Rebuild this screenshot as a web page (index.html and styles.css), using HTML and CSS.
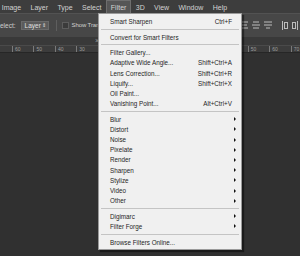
FILE: index.html
```html
<!DOCTYPE html>
<html lang="en">

<head>
  <meta charset="UTF-8">
  <title>Filter menu</title>
  <link rel="stylesheet" href="styles.css">
</head>

<body>
  <div class="app">
    <!-- menu bar -->
    <ul class="menubar">
      <li>Image</li>
      <li>Layer</li>
      <li>Type</li>
      <li>Select</li>
      <li class="open">Filter</li>
      <li>3D</li>
      <li>View</li>
      <li>Window</li>
      <li>Help</li>
    </ul>

    <!-- options bar -->
    <div class="options">
      <span class="label">elect:</span>
      <span class="select">Layer <span class="updown">&#8661;</span></span>
      <span class="vsep"></span>
      <span class="check"></span>
      <span class="label short">Show Tran</span>
      <span class="tools">
        <svg width="10" height="8" viewBox="0 0 10 8"><path d="M1 1h8M2 4h6M1 7h8" stroke="#bdbdbd" stroke-width="1"/></svg>
        <svg width="10" height="8" viewBox="0 0 10 8"><path d="M2 1h6M1 4h8M2 7h6" stroke="#bdbdbd" stroke-width="1"/></svg>
        <svg width="10" height="8" viewBox="0 0 10 8"><path d="M1 1h8M1 4h8M3 7h4" stroke="#bdbdbd" stroke-width="1"/></svg>
        <svg class="gap" width="8" height="9" viewBox="0 0 8 9"><path d="M1.5 0v9" stroke="#bdbdbd"/><rect x="3.5" y="1.5" width="3" height="6" fill="none" stroke="#bdbdbd"/></svg>
        <svg width="8" height="9" viewBox="0 0 8 9"><rect x="1.5" y="1.5" width="3" height="6" fill="none" stroke="#bdbdbd"/><path d="M6.5 0v9" stroke="#bdbdbd"/></svg>
      </span>
    </div>

    <!-- document tab strip -->
    <div class="tabs"><span class="close">&times;</span></div>

    <!-- ruler (labels under the menu are hidden anyway) -->
    <div class="ruler">
      <span>60</span><span>50</span><span>40</span><span>30</span>
      <span></span><span></span><span></span><span></span><span></span><span></span><span></span>
      <span>50</span><span>60</span><span>70</span>
    </div>

    <div class="canvas"></div>

    <!-- the open Filter menu -->
    <ul class="dropdown">
      <li>Smart Sharpen <em>Ctrl+F</em></li>
      <li class="sep"></li>
      <li>Convert for Smart Filters</li>
      <li class="sep"></li>
      <li>Filter Gallery...</li>
      <li>Adaptive Wide Angle... <em>Shift+Ctrl+A</em></li>
      <li>Lens Correction... <em>Shift+Ctrl+R</em></li>
      <li>Liquify... <em>Shift+Ctrl+X</em></li>
      <li>Oil Paint...</li>
      <li>Vanishing Point... <em>Alt+Ctrl+V</em></li>
      <li class="sep"></li>
      <li class="sub">Blur</li>
      <li class="sub">Distort</li>
      <li class="sub">Noise</li>
      <li class="sub">Pixelate</li>
      <li class="sub">Render</li>
      <li class="sub">Sharpen</li>
      <li class="sub">Stylize</li>
      <li class="sub">Video</li>
      <li class="sub">Other</li>
      <li class="sep"></li>
      <li class="sub">Digimarc</li>
      <li class="sub">Filter Forge</li>
      <li class="sep"></li>
      <li>Browse Filters Online...</li>
    </ul>
  </div>
</body>

</html>
```

FILE: styles.css
```css
* {
  box-sizing: border-box;
}

body {
  margin: 0;
  background: #303030;
  font-family: "Liberation Sans", Arial, sans-serif;
}

ul {
  margin: 0;
  padding: 0;
  list-style: none;
}

.app {
  position: relative;
  display: flex;
  flex-direction: column;
  width: 300px;
  height: 256px;
  overflow: hidden;
}

/* 顶部菜单栏 */
.menubar {
  display: flex;
  height: 13px;
  margin-left: -3px;
  background: #3d3d3d;
  color: #d2d2d2;
  font-size: 7px;
  white-space: nowrap;
}

.menubar li {
  padding: 3px 3.7px 0;
  border: 1px solid transparent;
  border-bottom: 0;
  line-height: 8px;
}

.menubar .open {
  background: #565656;
  border-color: #6e6e6e;
}

/* 选项栏 */
.options {
  display: flex;
  align-items: center;
  height: 24px;
  padding-bottom: 1px;
  background: #474747;
  border-top: 1px solid #525252;
  color: #d0d0d0;
  font-size: 6.5px;
  white-space: nowrap;
}

.select {
  display: flex;
  justify-content: space-between;
  align-items: center;
  width: 28px;
  height: 9px;
  margin-left: 5px;
  padding: 0 2px 0 3px;
  background: #5b5b5b;
  border: 1px solid #6a6a6a;
  color: #e0e0e0;
}

.updown {
  font-size: 5px;
}

.vsep {
  width: 1px;
  height: 11px;
  margin: 0 5px 0 7px;
  background: #5e5e5e;
}

.check {
  width: 7px;
  height: 7px;
  margin-right: 3px;
  background: #3b3b3b;
  border: 1px solid #5d5d5d;
}

/* 菜单左边只露出这一段 */
.short {
  font-size: 6px;
  letter-spacing: -0.1px;
}

.tools {
  display: flex;
  gap: 2px;
  align-items: center;
  margin-left: auto;
  padding-right: 1px;
}

.tools .gap {
  margin-left: 6px;
}

/* 文档标签 */
.tabs {
  height: 8px;
  background: #393939;
  color: #9a9a9a;
  font-size: 7px;
  line-height: 8px;
}

.close {
  margin-left: 95px;
}

/* 标尺 */
.ruler {
  display: flex;
  height: 8px;
  padding-left: 12px;
  background: #3c3c3c repeating-linear-gradient(90deg, #6a6a6a 0 1px, transparent 1px 2.68px) 12px 6px / 100% 2px no-repeat;
  border-top: 1px solid #4a4a4a;
  border-bottom: 1px solid #262626;
  color: #9c9c9c;
  font-size: 5px;
  line-height: 6px;
}

.ruler span {
  flex: none;
  width: 21.45px;
  padding-left: 2px;
  border-left: 1px solid #7a7a7a;
}

.canvas {
  flex: 1;
  background: #303030;
}

/* 下拉菜单 */
.dropdown {
  position: absolute;
  top: 13px;
  left: 98px;
  width: 144px;
  padding: 2.5px 0 1.5px;
  background: #f0f0f0;
  border: 1px solid #9a9a9a;
  box-shadow: 2px 2px 1px rgba(0, 0, 0, 0.45);
  color: #1e1e1e;
  font-size: 6.3px;
}

.dropdown li {
  display: flex;
  justify-content: space-between;
  align-items: center;
  height: 10.2px;
  padding: 0 9px 0 11px;
  white-space: nowrap;
}

.dropdown em {
  font-style: normal;
}

.dropdown .sub {
  padding-right: 5px;
}

.dropdown .sub::after {
  content: "";
  border-left: 2.5px solid #111;
  border-top: 2.5px solid transparent;
  border-bottom: 2.5px solid transparent;
}

.dropdown .sep {
  height: 1px;
  margin: 2.2px 2px;
  padding: 0;
  background: #c4c4c4;
}
```
